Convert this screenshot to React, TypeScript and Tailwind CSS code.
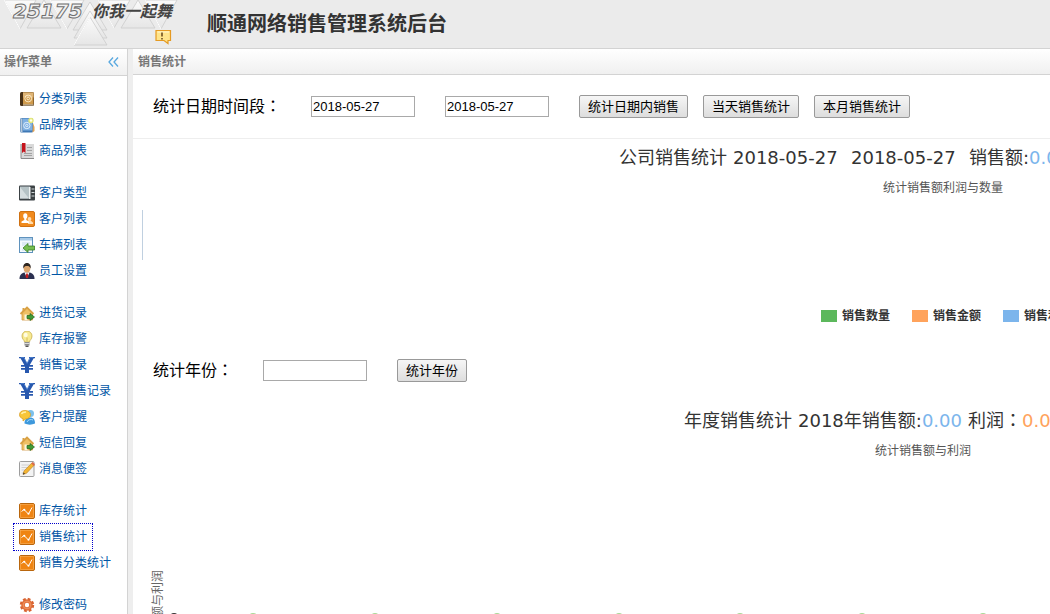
import type { ReactNode } from 'react';

type IconName =
  | 'book'
  | 'addressAdd'
  | 'bookmark'
  | 'binder'
  | 'users'
  | 'import'
  | 'staff'
  | 'house'
  | 'bulb'
  | 'yen'
  | 'chat'
  | 'note'
  | 'chart'
  | 'gear';

interface MenuItem {
  label: string;
  icon: IconName;
  active?: boolean;
}

const MENU_GROUPS: MenuItem[][] = [
  [
    { label: '分类列表', icon: 'book' },
    { label: '品牌列表', icon: 'addressAdd' },
    { label: '商品列表', icon: 'bookmark' }
  ],
  [
    { label: '客户类型', icon: 'binder' },
    { label: '客户列表', icon: 'users' },
    { label: '车辆列表', icon: 'import' },
    { label: '员工设置', icon: 'staff' }
  ],
  [
    { label: '进货记录', icon: 'house' },
    { label: '库存报警', icon: 'bulb' },
    { label: '销售记录', icon: 'yen' },
    { label: '预约销售记录', icon: 'yen' },
    { label: '客户提醒', icon: 'chat' },
    { label: '短信回复', icon: 'house' },
    { label: '消息便签', icon: 'note' }
  ],
  [
    { label: '库存统计', icon: 'chart' },
    { label: '销售统计', icon: 'chart', active: true },
    { label: '销售分类统计', icon: 'chart' }
  ],
  [{ label: '修改密码', icon: 'gear' }]
];

const ICONS: Record<IconName, ReactNode> = {
  book: (
    <>
      <rect x="1" y="1" width="14" height="14" rx="1.5" fill="#4a3216" />
      <rect x="4" y="1.5" width="10.5" height="12" fill="#cf9a4c" />
      <rect x="4" y="1.5" width="10.5" height="5" fill="#dfb474" />
      <rect x="4" y="13.5" width="10.5" height="1" fill="#e9dcc4" />
      <circle cx="9.2" cy="7.5" r="3.4" fill="none" stroke="#fff0cf" strokeWidth="0.9" />
      <circle cx="9.2" cy="7.5" r="1.3" fill="none" stroke="#fff0cf" strokeWidth="0.9" />
    </>
  ),
  addressAdd: (
    <>
      <rect x="1" y="1" width="13" height="14.5" rx="1.5" fill="#3f78b5" />
      <rect x="4" y="1.5" width="9.5" height="12" fill="#7fb0e2" />
      <rect x="1.5" y="1.5" width="2" height="13.5" fill="#b7c9dc" />
      <circle cx="7.8" cy="8.5" r="3.2" fill="none" stroke="#e9f4ff" strokeWidth="0.9" />
      <circle cx="7.8" cy="8.5" r="1.2" fill="none" stroke="#e9f4ff" strokeWidth="0.9" />
      <path d="M14 6l1.5 4v4l-2 1.500z" fill="#e2a355" />
      <circle cx="12" cy="3.500" r="2.700" fill="#e4e87a" />
      <circle cx="12" cy="3.500" r="1.200" fill="#fffff0" />
    </>
  ),
  bookmark: (
    <>
      <rect x="2" y="1" width="13" height="14" fill="#d9d9d9" />
      <path d="M2 1v14.500h13" fill="none" stroke="#8b8b8b" />
      <path d="M8 4.500h5M8 7.500h5M5 10.500h8M5 12.500h8" stroke="#a3a3a3" />
      <path d="M3 0h3.500v10L4.750 8.500 3 10z" fill="#c5141c" />
    </>
  ),
  binder: (
    <>
      <rect x="0" y="0.500" width="16" height="15" rx="1" fill="#3b4144" />
      <rect x="1" y="1.500" width="10" height="12" fill="#b5c2c5" />
      <path d="M1 13.500V2l9 11.500z" fill="#d5dddf" />
      <rect x="10" y="2" width="1.500" height="12" fill="#eef2f2" />
      <path d="M12.500 4h3M12.500 7.500h3M12.500 11h3" stroke="#cfd6d6" />
    </>
  ),
  users: (
    <>
      <rect x="0.500" y="0.500" width="15" height="15" rx="1.500" fill="#f08a1d" stroke="#cf7112" />
      <circle cx="10.500" cy="8" r="1.900" fill="#ffdcae" />
      <path d="M9.500 9.500h2l2.500 2V13H9z" fill="#ffdcae" />
      <ellipse cx="6.300" cy="5" rx="2.100" ry="2.800" fill="#fff" />
      <path d="M5.300 7h2v2l2.700 1.500V12H2.500v-1.500L5.300 9z" fill="#fff" />
    </>
  ),
  import: (
    <>
      <rect x="0.500" y="0.500" width="13" height="15" fill="#f4f9fd" stroke="#5f92bd" />
      <rect x="1" y="1" width="12" height="2.500" fill="#a9cbe8" />
      <path d="M3 6h8M3 8h4M3 13h5" stroke="#c6dbea" />
      <path d="M4 11l5-4.500V9h6.500v4H9v2.500z" fill="#75bd4e" stroke="#397f26" strokeWidth="0.800" />
    </>
  ),
  staff: (
    <>
      <path d="M0.500 16c0-4 2-6 5-6.500h5c3 .500 5 2.500 5 6.500z" fill="#2b3050" />
      <path d="M5.500 9.500L8 15l2.500-5.500z" fill="#fff" />
      <path d="M7.300 10.500h1.400l.800 3.500L8 15.500 6.500 14z" fill="#c81d1d" />
      <ellipse cx="8" cy="5.500" rx="3.300" ry="4" fill="#dca56c" />
      <path d="M4.300 5.500C3.700 1.500 6 0 8 0s4.300 1.500 3.700 5.500C10.500 3.500 10 3 8 3S5.500 3.500 4.300 5.500z" fill="#2f2621" />
    </>
  ),
  house: (
    <>
      <path d="M3 8v7h10.500V8L8 2.500z" fill="#efc065" stroke="#cf9845" strokeWidth="0.800" />
      <path d="M1.500 9L8 2.500 14.500 9" fill="none" stroke="#d9a145" strokeWidth="1.800" />
      <path d="M3.500 3v3.500l2-2V3z" fill="#d9a145" />
      <path d="M5.500 15V9.500h3V15z" fill="#fff6db" />
      <path d="M8 10.500h3V8.500l4.500 3.500-4.500 3.500v-2H8z" fill="#419b36" stroke="#22661d" strokeWidth="0.700" />
    </>
  ),
  bulb: (
    <>
      <path d="M5.500 11C5.500 9 3 8.500 3 5a5 5 0 0110 0c0 3.500-2.500 4-2.500 6z" fill="#f7ea92" stroke="#c9ae4e" strokeWidth="0.800" />
      <ellipse cx="6.700" cy="4" rx="2" ry="2.300" fill="#fffce2" />
      <path d="M8 10V6.500" stroke="#cbb14d" strokeWidth="0.800" />
      <rect x="5.500" y="11" width="5" height="3.500" fill="#8f8f8f" />
      <path d="M5.500 12.500h5" stroke="#dcdcdc" />
      <rect x="6.500" y="14.500" width="3" height="1.500" fill="#555" />
    </>
  ),
  yen: (
    <>
      <path d="M0 0h6v1.200h-.8L8.200 6.200 11 1.200h-1V0h6v1.200h-1.300L10.800 8H14v1.700h-4V11h4v1.700h-4V16H6v-3.300H2V11h4V9.700H2V8h3.300L1.500 1.200H0z" fill="#2858ae" />
      <path d="M2 .500h3L8 6.500l3-6h3" fill="none" stroke="#4b80cd" strokeWidth="0.800" />
    </>
  ),
  chat: (
    <>
      <circle cx="11.500" cy="4.500" r="3.500" fill="#7cc0ec" />
      <path d="M5.500 14.500c0-4 2-6 5.500-6s5 2 5 6c-3 1.500-7.500 1.500-10.500 0z" fill="#3d98dc" />
      <path d="M8 13c1-2.500 4-3 6-2" fill="none" stroke="#a9dbf8" />
      <path d="M6 1.500c3.500 0 5.500 1.700 5.500 4.200S9 10 6.500 10l-2.500 2v-2.300C1.500 9 .500 7.500.500 5.700.500 3 2.500 1.500 6 1.500z" fill="#f8c638" stroke="#d99a1a" strokeWidth="0.700" />
      <path d="M2.500 5C3 3.500 5 3 7 3" fill="none" stroke="#fff0a8" strokeWidth="1.300" />
    </>
  ),
  note: (
    <>
      <rect x="0.500" y="0.500" width="14.500" height="15" rx="1" fill="#f3f3f3" stroke="#9d9d9d" />
      <path d="M2.500 4h8M2.500 6.500h6M2.500 9h4M2.500 12h3" stroke="#cfcfcf" />
      <path d="M4 13.500l1-3.500L13 1.800 15.300 4 7.500 12.300z" fill="#f3b532" stroke="#bb7a1d" strokeWidth="0.600" />
      <path d="M4 13.500l.600-2 1.400 1.300z" fill="#333" />
      <path d="M12.300 2.500l2.300 2.200 1.400-1.500L13.700 1z" fill="#dc6a4c" />
    </>
  ),
  chart: (
    <>
      <rect x="0.500" y="0.500" width="15" height="15" rx="1.500" fill="#ef8412" stroke="#b9660d" />
      <rect x="1.500" y="1.500" width="13" height="13" fill="none" stroke="#f9b15d" strokeWidth="0.600" />
      <path d="M2.500 8.500L5 6.500l4.500 4.500 3.500-6.500" fill="none" stroke="#fff" strokeWidth="1" />
      <circle cx="5.300" cy="6.700" r="1" fill="#fff" />
      <circle cx="9.500" cy="10.700" r="1" fill="#fff" />
    </>
  ),
  gear: (
    <>
      <circle cx="8" cy="8" r="5.800" fill="#e2703a" />
      <circle cx="8" cy="8" r="6.200" fill="none" stroke="#d8622f" strokeWidth="2" strokeDasharray="2.800 2.070" />
      <circle cx="8" cy="8" r="3.800" fill="none" stroke="#f09a6a" strokeWidth="0.800" />
      <circle cx="8" cy="8" r="2.200" fill="#fff" />
    </>
  )
};

function MenuIcon({ name }: { name: IconName }) {
  return (
    <svg className="h-4 w-4 shrink-0" viewBox="0 0 16 16" aria-hidden="true">
      {ICONS[name]}
    </svg>
  );
}

// 全角冒号居中显示
function Colon() {
  return <span className="font-['Noto_Sans_CJK_TC',sans-serif] leading-none">：</span>;
}

function Logo() {
  return (
    <svg className="h-[46px] w-[200px] shrink-0" viewBox="0 0 200 46" role="img" aria-label="25175 你我一起舞">
      <defs>
        <linearGradient id="tri" x1="0" y1="0" x2="0" y2="1">
          <stop offset="0" stopColor="#fbfbfb" />
          <stop offset="1" stopColor="#e6e6e6" />
        </linearGradient>
      </defs>
      <g fill="url(#tri)" stroke="#cccccc" strokeWidth="0.800">
        <path d="M4 0h32L20 29z" />
        <path d="M27 28L44 0l17 28z" />
        <path d="M50 0h34L67 29z" />
        <path d="M98 0h32l-16 28z" />
        <path d="M121 28l17-28 17 28z" />
        <path d="M145 0h32l-16 29z" />
        <path d="M73 30L90 2l17 28z" />
        <path d="M74 38l16-27 17 27z" />
        <path d="M74 45l16-28 17 28z" />
      </g>
      <path d="M4 0l16 29M50 0l17 29M98 0l16 28M145 0l16 29M90 17L74 45" fill="none" stroke="#fff" />
      <text
        x="13"
        y="18"
        fontSize="20"
        fontWeight="700"
        fontStyle="italic"
        fontFamily="DejaVu Sans, sans-serif"
        fill="#f1f1f1"
        stroke="#6f6f6f"
        strokeWidth="1"
      >
        25175
      </text>
      <text
        x="92"
        y="17"
        fontSize="16"
        fontWeight="700"
        fontStyle="italic"
        fontFamily="Noto Sans CJK SC, sans-serif"
        fill="#444"
      >
        你我一起舞
      </text>
      <path d="M156 30.500h14.500v10h-2.500v3l-4-3h-8z" fill="#ffe48a" stroke="#e59a22" strokeWidth="1.200" />
      <path d="M157.500 32h11.500" stroke="#fff8d4" />
      <path d="M162 32.500v4M162 38v1.500" stroke="#5b3a12" strokeWidth="1.400" />
    </svg>
  );
}

function Sidebar() {
  return (
    <aside className="flex w-32 shrink-0 flex-col border-r border-[#d3d3d3] bg-white">
      <div className="flex h-[27px] shrink-0 items-center justify-between border-b border-[#d3d3d3] bg-linear-to-b from-white to-[#f0f0f0] pr-2 pl-1 text-xs font-bold text-[#777]">
        <h2>操作菜单</h2>
        <button type="button" aria-label="折叠菜单">
          <svg className="h-3 w-3" viewBox="0 0 12 12" aria-hidden="true">
            <path d="M6 1.500L2 6l4 4.500M11 1.500L7 6l4 4.500" fill="none" stroke="#58a8df" strokeWidth="1.300" />
          </svg>
        </button>
      </div>
      <nav className="flex flex-col gap-4 pt-[10px] pl-[14px] text-xs text-[#0055a5]">
        {MENU_GROUPS.map((group) => (
          <ul key={group[0].label}>
            {group.map((item) => (
              <li key={item.label} className="flex">
                <a
                  href="#"
                  className={`flex h-[26px] items-center gap-1 px-[5px] whitespace-nowrap ${
                    item.active ? 'outline-1 outline-[#0000cc] outline-dotted' : ''
                  }`}
                >
                  <MenuIcon name={item.icon} />
                  {item.label}
                </a>
              </li>
            ))}
          </ul>
        ))}
      </nav>
    </aside>
  );
}

function DateInput({ label, value, id }: { label?: string; value: string; id?: string }) {
  return (
    <input
      id={id}
      type="text"
      aria-label={label}
      defaultValue={value}
      className="h-[21px] w-[104px] shrink-0 border border-[#a9a9a9] bg-white px-px font-['Liberation_Sans',sans-serif] text-[13px] text-black"
    />
  );
}

function FormButton({ children }: { children: ReactNode }) {
  return (
    <button
      type="button"
      className="h-[23px] shrink-0 rounded-[2px] border border-[#999] bg-linear-to-b from-[#f6f6f6] to-[#dddddd] px-2 text-[13px] leading-5 whitespace-nowrap text-black"
    >
      {children}
    </button>
  );
}

const LEGEND = [
  { label: '销售数量', color: 'bg-[#5cb85c]' },
  { label: '销售金额', color: 'bg-[#ffa35c]' },
  { label: '销售利润', color: 'bg-[#7cb5ec]' }
];

function CompanyChart() {
  return (
    <section className="whitespace-nowrap">
      <h3 className="flex gap-[6px] pt-[7px] pl-[486px] font-['DejaVu_Sans','Noto_Sans_CJK_SC',sans-serif] text-lg leading-6 text-[#333]">
        <span>公司销售统计</span>
        <span className="w-28 shrink-0">2018-05-27</span>
        <span className="w-28 shrink-0">2018-05-27</span>
        <span>
          销售额:<span className="text-[#7cb5ec]">0.00</span>
        </span>
      </h3>
      <p className="mt-[10px] pl-[750px] text-xs leading-4 text-[#555]">统计销售额利润与数量</p>
      <div className="mt-[14px] ml-[9px] h-[50px] border-l border-[#c0d0e0]" />
      <ul className="mt-12 flex gap-[22px] pl-[688px] text-xs leading-4 font-bold text-[#333]">
        {LEGEND.map((item) => (
          <li key={item.label} className="flex items-center gap-[5px]">
            <span className={`h-3 w-4 ${item.color}`} />
            {item.label}
          </li>
        ))}
      </ul>
    </section>
  );
}

const MONTH_POINTS = [120, 242, 364, 486, 607, 729, 850];

function YearChart() {
  return (
    <section className="pt-[27px] whitespace-nowrap">
      <h3 className="flex h-6 gap-[6px] pl-[551px] font-['DejaVu_Sans','Noto_Sans_CJK_SC',sans-serif] text-lg leading-6 text-[#333]">
        <span>年度销售统计</span>
        <span>
          2018年销售额:<span className="text-[#7cb5ec]">0.00</span>
        </span>
        <span>
          利润
          <Colon />
          <span className="text-[#ffa35c]">0.00</span>
        </span>
      </h3>
      <p className="mt-[10px] pl-[742px] text-xs leading-4 text-[#555]">统计销售额与利润</p>
      <svg className="block h-[200px] w-[917px]" viewBox="0 0 917 200" aria-hidden="true">
        <text
          transform="translate(29 111) rotate(-90)"
          textAnchor="end"
          fontSize="12"
          fontFamily="Noto Sans CJK SC, sans-serif"
          fill="#666"
        >
          销售额与利润
        </text>
        <circle cx="41" cy="158" r="4" fill="#333" />
        {MONTH_POINTS.map((x) => (
          <circle key={x} cx={x} cy="158" r="4" fill="#a9d896" />
        ))}
      </svg>
    </section>
  );
}

export default function App() {
  return (
    <div className="flex h-screen flex-col overflow-hidden bg-[#eeeeee] font-['Liberation_Sans','Noto_Sans_CJK_SC',sans-serif]">
      <header className="flex h-[49px] shrink-0 items-start gap-[7px] border-b border-[#d3d3d3] bg-[#ebebeb]">
        <Logo />
        <h1 className="pt-2 text-xl leading-8 font-bold whitespace-nowrap text-[#333]">顺通网络销售管理系统后台</h1>
      </header>
      <div className="flex min-h-0 flex-1 gap-[5px]">
        <Sidebar />
        <main className="min-w-0 flex-1 overflow-hidden bg-white">
          <h2 className="flex h-[26px] items-center border-b border-[#d3d3d3] bg-linear-to-b from-white to-[#f0f0f0] pl-[5px] text-xs font-bold text-[#777]">
            销售统计
          </h2>
          <form className="flex h-16 items-center border-b border-[#eeeeee] pl-5 whitespace-nowrap">
            <label htmlFor="start-date" className="text-base text-black">
              统计日期时间段
              <Colon />
            </label>
            <div className="ml-[30px] flex items-center gap-[30px]">
              <DateInput id="start-date" value="2018-05-27" />
              <DateInput label="结束日期" value="2018-05-27" />
              <div className="flex gap-[15px]">
                <FormButton>统计日期内销售</FormButton>
                <FormButton>当天销售统计</FormButton>
                <FormButton>本月销售统计</FormButton>
              </div>
            </div>
          </form>
          <CompanyChart />
          <form className="mt-[35px] flex h-[23px] items-center gap-[30px] pl-5 whitespace-nowrap">
            <label htmlFor="year" className="text-base text-black">
              统计年份
              <Colon />
            </label>
            <DateInput id="year" value="" />
            <FormButton>统计年份</FormButton>
          </form>
          <YearChart />
        </main>
      </div>
    </div>
  );
}
